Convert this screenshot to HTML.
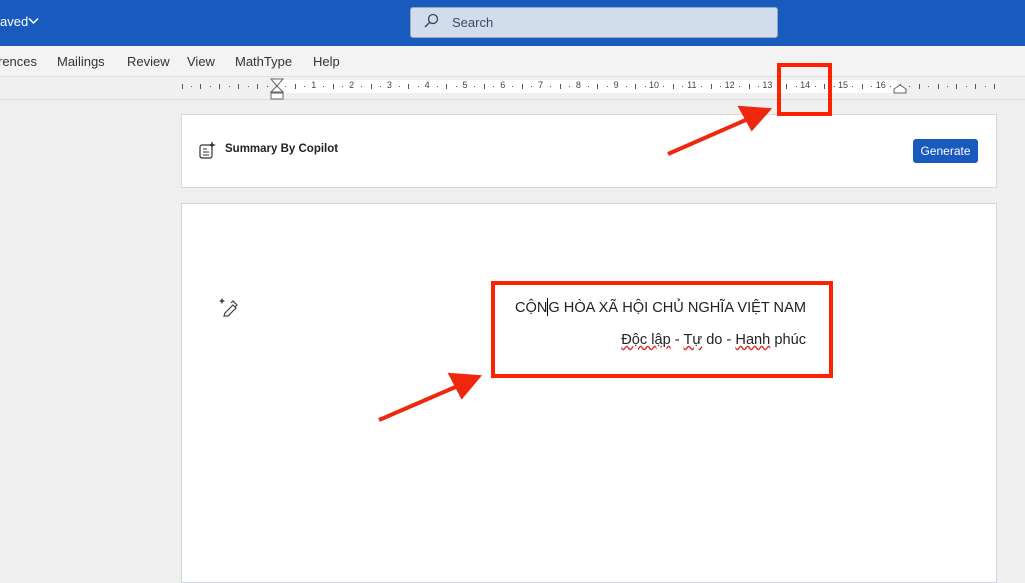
<!DOCTYPE html>
<html><head><meta charset="utf-8"><style>
*{margin:0;padding:0;box-sizing:border-box}
body{width:1025px;height:573px;overflow:hidden;background:#efefef;font-family:"Liberation Sans","DejaVu Sans",sans-serif;position:relative}
.abs{position:absolute}
</style></head><body>
<div class="abs" style="left:0;top:0;width:1025px;height:46px;background:#185abd"></div>
<div class="abs" style="left:0;top:14px;color:#fff;font-size:13px">aved</div>
<svg class="abs" style="left:28px;top:17px" width="11" height="8"><path d="M1 1.5L5.5 6L10 1.5" stroke="#fff" stroke-width="1.5" fill="none"/></svg>
<div class="abs" style="left:410px;top:7px;width:368px;height:31px;background:#d1dcec;border:1px solid #9aa8bd;border-radius:3px"></div>
<svg class="abs" style="left:423px;top:13px" width="16" height="16"><circle cx="10" cy="6" r="4.5" stroke="#33435d" stroke-width="1.3" fill="none"/><path d="M6.8 9.2L2 14" stroke="#33435d" stroke-width="1.4"/></svg>
<div class="abs" style="left:452px;top:15px;color:#3c4a60;font-size:13px">Search</div>
<div class="abs" style="left:0;top:46px;width:1025px;height:31px;background:#f3f3f3;border-bottom:1px solid #e0e0e0"></div>
<div class="abs" style="top:54px;left:0;font-size:13px;color:#333;white-space:nowrap">
<span class="abs" style="left:-2px">rences</span><span class="abs" style="left:57px">Mailings</span><span class="abs" style="left:127px">Review</span><span class="abs" style="left:187px">View</span><span class="abs" style="left:235px">MathType</span><span class="abs" style="left:313px">Help</span></div>
<div class="abs" style="left:0;top:77px;width:1025px;height:23px;background:#f0f0f0;border-bottom:1px solid #ddd"></div>
<div class="abs" style="left:276px;top:80px;width:621px;height:13px;background:#fff"></div>
<div id="ruler" class="abs" style="left:0;top:80px;width:1025px;height:14px;font-size:9px;color:#444"></div>
<svg class="abs" style="left:270px;top:78px" width="14" height="22"><path d="M1 1H13L7 8ZM7 8L1 14H13Z" fill="#fff" stroke="#666"/><rect x="1" y="15" width="12" height="6" fill="#fff" stroke="#666"/></svg>
<svg class="abs" style="left:893px;top:84px" width="14" height="10"><path d="M1 9V5L7 1L13 5V9Z" fill="#fff" stroke="#666"/></svg>
<div class="abs" style="left:181px;top:114px;width:816px;height:74px;background:#fff;border:1px solid #d8d8d8"></div>
<svg class="abs" style="left:198px;top:141px" width="18" height="18"><rect x="2" y="4" width="12" height="13" rx="2" fill="none" stroke="#333" stroke-width="1.2"/><path d="M5 8H9M5 11H11M5 14H11" stroke="#333" stroke-width="1.1"/><path d="M14 0L15 3L18 4L15 5L14 8L13 5L10 4L13 3Z" fill="#333"/></svg>
<div class="abs" style="left:225px;top:143px;font-size:11.5px;font-weight:bold;color:#222">Summary By Copilot</div>
<div class="abs" style="left:913px;top:139px;width:65px;height:24px;background:#185abd;border-radius:3px;color:#fff;font-size:12px;text-align:center;line-height:24px">Generate</div>
<div class="abs" style="left:181px;top:203px;width:816px;height:380px;background:#fff;border:1px solid #d0d4dc"></div>
<svg class="abs" style="left:219px;top:297px" width="20" height="20"><path d="M3 1L4 3L6 4L4 5L3 7L2 5L0 4L2 3Z" fill="#444"/><path d="M6 16L14 8L17 11L9 19L5 19Z" fill="none" stroke="#444" stroke-width="1.2"/><path d="M12 6L14 4L18 8L16 10" fill="none" stroke="#444" stroke-width="1.2"/></svg>
<div class="abs" style="left:480px;top:298px;width:326px;text-align:right;font-size:14.6px;color:#222;white-space:nowrap">CỘN<span style="display:inline-block;width:1px;height:18px;background:#000;vertical-align:-4px"></span>G HÒA XÃ HỘI CHỦ NGHĨA VIỆT NAM</div>
<div class="abs" style="left:550px;top:332px;width:256px;text-align:right;font-size:14.6px;color:#222;white-space:nowrap"><span style="text-decoration:underline wavy #d33">Độc lập</span> - <span style="text-decoration:underline wavy #d33">Tự</span> do - <span style="text-decoration:underline wavy #d33">Hanh</span> phúc</div>
<div class="abs" style="left:777px;top:63px;width:55px;height:53px;border:4px solid #ff2200"></div>
<div class="abs" style="left:491px;top:281px;width:342px;height:97px;border:4px solid #ff2200"></div>
<svg class="abs" style="left:0;top:0" width="1025" height="573"><g stroke="#f0270f" stroke-width="4" fill="#f0270f"><path d="M668 154L748 119"/><path d="M768 110L741 108L752 128Z"/><path d="M379 420L460 385"/><path d="M478 377L451 375L462 396Z"/></g></svg>
<script>
var r=document.getElementById('ruler'),h='',z=276,s=37.8;
for(var i=-2.5;i<=19.5;i+=0.25){var x=z+i*s;if(x<180||x>995)continue;var f=((Math.round(i*4)%4)+4)%4;
if(f===0&&i>0&&i<=16){h+='<span class="abs" style="left:'+(x-6)+'px;top:0;width:12px;text-align:center">'+Math.round(i)+'</span>';}
else if(f===2||f===0){h+='<span class="abs" style="left:'+x+'px;top:4px;width:1px;height:5px;background:#555"></span>';}
else{h+='<span class="abs" style="left:'+x+'px;top:6px;width:1px;height:1px;background:#555"></span>';}}
r.innerHTML=h;
</script>
</body></html>
